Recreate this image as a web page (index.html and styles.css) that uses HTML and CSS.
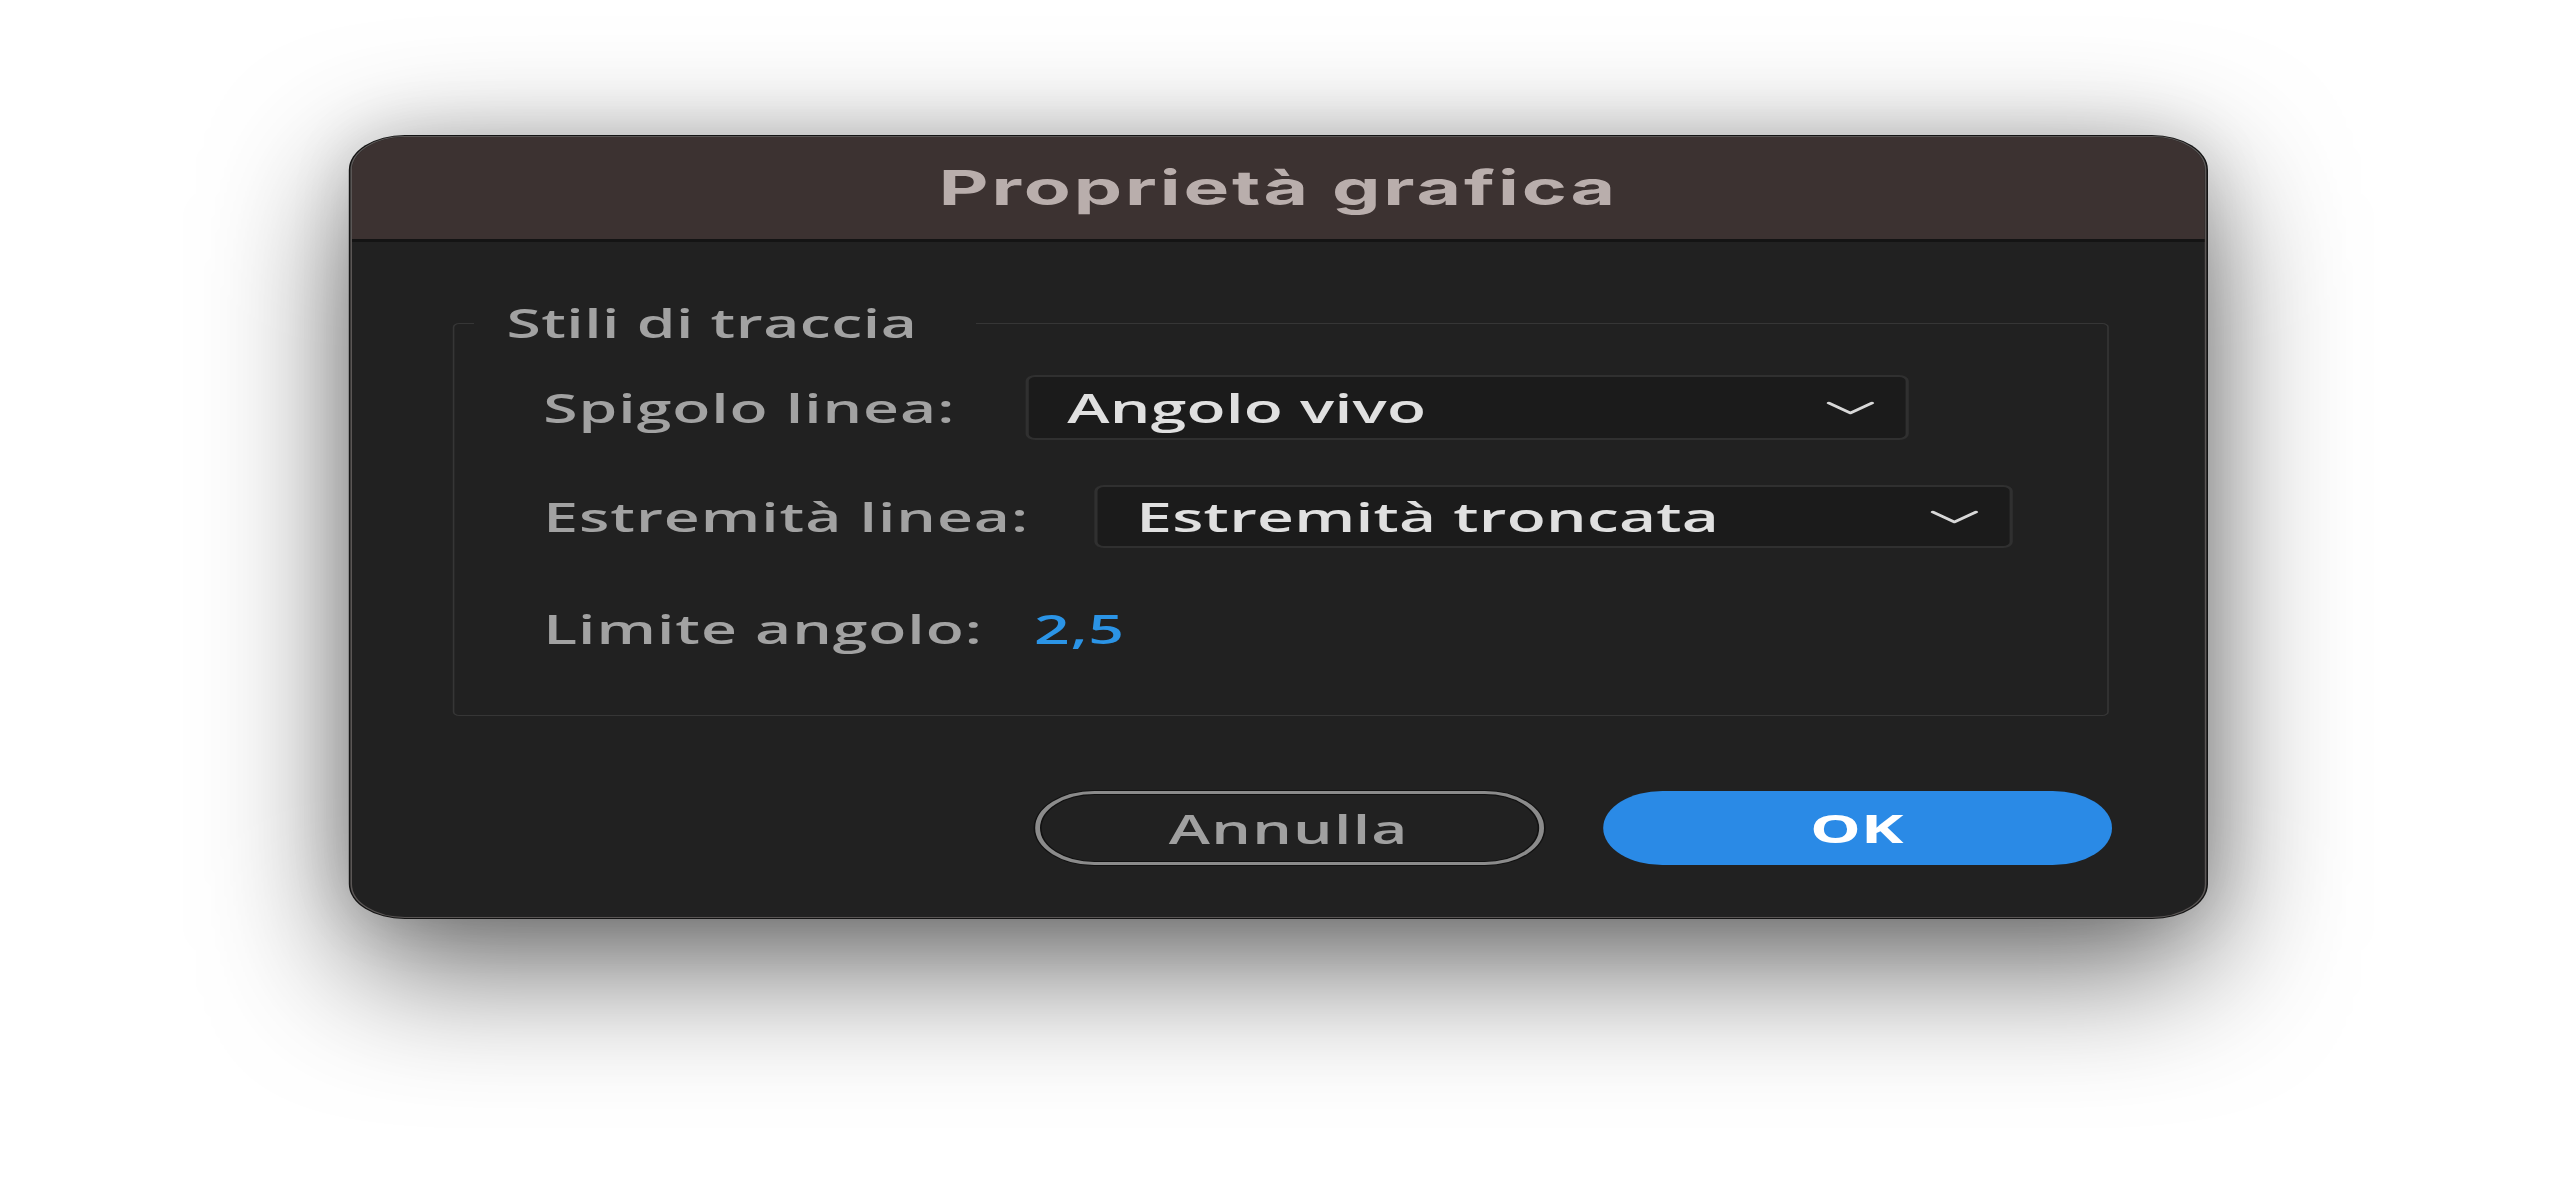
FILE: index.html
```html
<!DOCTYPE html>
<html lang="it">
<head>
<meta charset="utf-8">
<title>Proprietà grafica</title>
<link rel="stylesheet" href="styles.css">
</head>
<body>
<div class="stage">
  <div class="dialog">
    <div class="titlebar"><h1 class="title">Proprietà grafica</h1></div>
    <div class="content">
      <fieldset class="group">
        <legend class="legend">Stili di traccia</legend>
        <div class="row row-join">
          <span class="label">Spigolo linea:</span>
          <div class="select select-join">
            <span class="select-text">Angolo vivo</span>
            <svg class="chevron" viewBox="0 0 31 14" width="31" height="14"><polyline points="2,2 15.5,12 29,2"/></svg>
          </div>
        </div>
        <div class="row row-cap">
          <span class="label">Estremità linea:</span>
          <div class="select select-cap">
            <span class="select-text">Estremità troncata</span>
            <svg class="chevron" viewBox="0 0 31 14" width="31" height="14"><polyline points="2,2 15.5,12 29,2"/></svg>
          </div>
        </div>
        <div class="row row-limit">
          <span class="label">Limite angolo:</span>
          <span class="value">2,5</span>
        </div>
      </fieldset>
      <div class="actions">
        <button class="btn btn-cancel">Annulla</button>
        <button class="btn btn-ok">OK</button>
      </div>
    </div>
  </div>
</div>
</body>
</html>
```

FILE: styles.css
```css
html, body {
  margin: 0;
  padding: 0;
  height: 100%;
  overflow: hidden;
  background: #ffffff;
}

.stage {
  width: 1598px;
  height: 1187px;
  padding-top: 136px;
  box-sizing: border-box;
  transform: scaleX(1.6);
  transform-origin: 0 0;
  font-family: "Open Sans", "Noto Sans", sans-serif;
}

.dialog {
  width: 1160px;
  height: 782px;
  margin: 0 auto;
  box-sizing: border-box;
  background: #212121;
  border: 1.5px solid #5a5655;
  border-radius: 34px;
  box-shadow: 0 0 0 1px #141414, 0 45px 110px rgba(0, 0, 0, 0.62), 0 0 50px rgba(0, 0, 0, 0.12);
  overflow: hidden;
  display: flex;
  flex-direction: column;
}

.titlebar {
  height: 102px;
  flex: none;
  background: #3c3231;
  border-bottom: 3px solid #141414;
  display: flex;
  align-items: center;
  justify-content: center;
}

.title {
  margin: 0;
  font-family: "Inter", "Liberation Sans", sans-serif;
  font-weight: 700;
  font-size: 48px;
  letter-spacing: 1.8px;
  line-height: 1;
  color: #b9aeac;
}

.content {
  flex: 1;
  padding: 61px 60.5px 0 62.5px;
  display: flex;
  flex-direction: column;
}

.group {
  margin: 0;
  padding: 0 0 55px 0;
  border: 1px solid #363636;
  border-radius: 4px;
  min-inline-size: 0;
}

.legend {
  margin-left: 12px;
  padding: 0 37px 0 21px;
  font-size: 39px;
  font-weight: 600;
  line-height: 40px;
  letter-spacing: 0.3px;
  color: #a2a2a2;
}

.row {
  display: flex;
  align-items: center;
  gap: 44px;
  padding-left: 56px;
}

.row-join {
  margin-top: 32px;
  height: 65px;
}

.row-cap {
  margin-top: 45px;
  height: 63px;
  gap: 41px;
}

.row-limit {
  margin-top: 48px;
  height: 64px;
  gap: 32px;
}

.label {
  font-size: 39px;
  font-weight: 600;
  line-height: 1;
  letter-spacing: 0.6px;
  color: #a2a2a2;
}

.value {
  font-size: 39px;
  font-weight: 600;
  line-height: 1;
  letter-spacing: 0.5px;
  color: #2b94e6;
}

.select {
  height: 100%;
  box-sizing: border-box;
  border: 2px solid #303030;
  border-radius: 6px;
  background: #1b1b1b;
  display: flex;
  align-items: center;
  justify-content: space-between;
  padding: 0 19px 0 24px;
}

.select-join {
  width: 552px;
}

.select-cap {
  width: 574px;
}

.select-text {
  font-size: 40px;
  font-weight: 600;
  line-height: 1;
  letter-spacing: 0.15px;
  color: #e0e0e0;
}

.chevron {
  display: block;
  fill: none;
  stroke: #d8d8d8;
  stroke-width: 2.6;
  stroke-linecap: round;
  stroke-linejoin: round;
}

.actions {
  display: flex;
  justify-content: flex-end;
  gap: 37px;
  margin-top: 75px;
  margin-right: -2px;
}

.btn {
  width: 318px;
  height: 74px;
  box-sizing: border-box;
  border-radius: 37px;
  font-family: "Open Sans", "Noto Sans", sans-serif;
  font-size: 39px;
  line-height: 1;
  padding: 0;
  cursor: default;
}

.btn-cancel {
  background: transparent;
  border: 3px solid #8b8b8b;
  box-shadow: 0 0 0 1px #111111, inset 0 0 0 1px #111111;
  color: #a0a0a0;
  font-weight: 600;
  letter-spacing: 0.8px;
}

.btn-ok {
  background: #2a8ae6;
  border: none;
  color: #ffffff;
  font-weight: 700;
  font-size: 40px;
}
```
